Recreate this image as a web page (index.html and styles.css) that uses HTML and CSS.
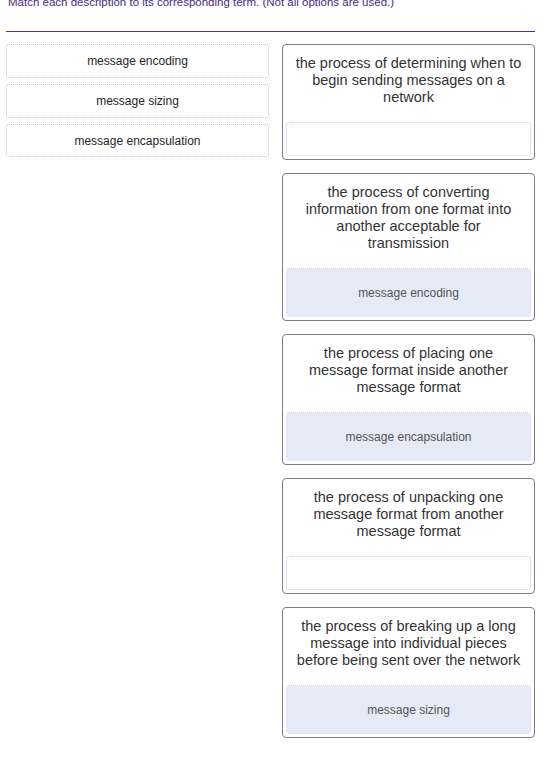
FILE: index.html
```html
<!DOCTYPE html>
<html>
<head>
<meta charset="utf-8">
<link rel="stylesheet" href="styles.css">
</head>
<body>
<div class="page">
  <p class="instructions">Match each description to its corresponding term. (Not all options are used.)</p>
  <hr class="rule">
  <div class="matching">
    <div class="options">
      <div class="option">message encoding</div>
      <div class="option">message sizing</div>
      <div class="option">message encapsulation</div>
    </div>
    <div class="targets">
      <div class="card">
        <div class="desc">the process of determining when to begin sending messages on a network</div>
        <div class="drop empty"></div>
      </div>
      <div class="card">
        <div class="desc">the process of converting information from one format into another acceptable for transmission</div>
        <div class="drop"><div class="answer">message encoding</div></div>
      </div>
      <div class="card">
        <div class="desc">the process of placing one message format inside another message format</div>
        <div class="drop"><div class="answer">message encapsulation</div></div>
      </div>
      <div class="card">
        <div class="desc">the process of unpacking one message format from another message format</div>
        <div class="drop empty"></div>
      </div>
      <div class="card">
        <div class="desc">the process of breaking up a long message into individual pieces before being sent over the network</div>
        <div class="drop"><div class="answer">message sizing</div></div>
      </div>
    </div>
  </div>
</div>
</body>
</html>
```
FILE: styles.css
```css
html, body {
  margin: 0;
  padding: 0;
  background: #ffffff;
  font-family: "Liberation Sans", Arial, sans-serif;
}
.page {
  padding: 0 13px 0 6px;
  width: 529px;
}
.instructions {
  margin: -5px 0 0 2px;
  font-size: 11.5px;
  line-height: 14px;
  color: #4a2a7c;
}
.rule {
  margin: 22px 0 12px 0;
  border: 0;
  border-top: 1px solid #5b2a86;
  height: 0;
}
.matching {
  display: grid;
  grid-template-columns: 263px 253px;
  column-gap: 13px;
  align-items: start;
}
.options {
  display: flex;
  flex-direction: column;
  gap: 6px;
}
.option {
  height: 32px;
  border: 1px dotted #b3c4da;
  border-radius: 3px;
  display: flex;
  align-items: center;
  justify-content: center;
  font-size: 12px;
  color: #1f1f1f;
}
.option:last-child {
  height: 31px;
}
.targets {
  display: flex;
  flex-direction: column;
  gap: 13px;
}
.card {
  border: 1px solid #7b8087;
  border-radius: 4px;
  padding: 10px 3px 3px 3px;
  display: flex;
  flex-direction: column;
}
.desc {
  font-size: 14.5px;
  line-height: 17px;
  color: #333333;
  text-align: center;
  padding: 0 8px;
  margin-bottom: 16px;
}
.drop {
  border: 1px dotted #d4c3ec;
  border-radius: 3px;
  height: 47px;
  display: flex;
}
.drop.empty {
  height: 32px;
  border-bottom-color: #c3cfe6;
}
.answer {
  flex: 1;
  background: #e4eaf6;
  border-radius: 3px;
  display: flex;
  align-items: center;
  justify-content: center;
  font-size: 12px;
  color: #555555;
}
```
